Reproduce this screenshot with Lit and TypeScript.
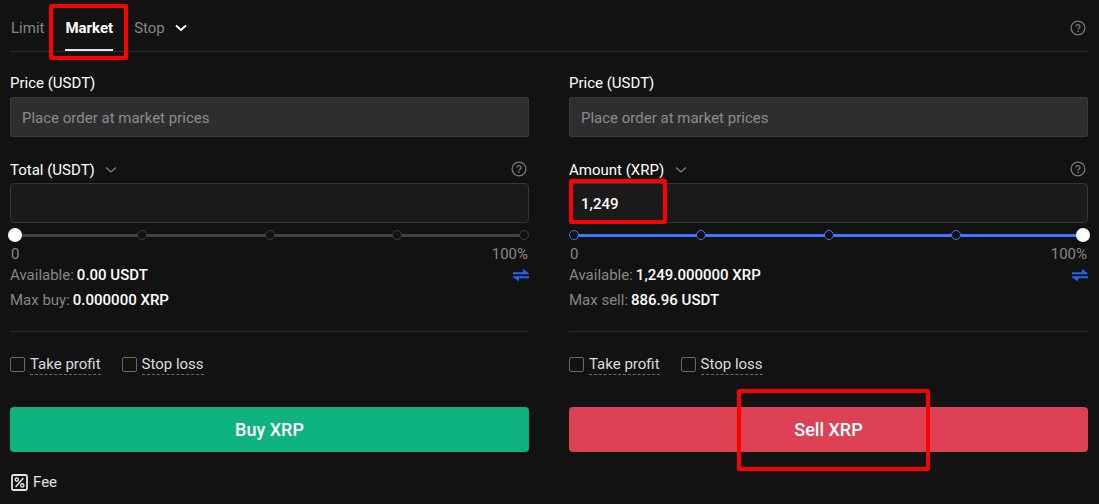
import { LitElement, html, css } from "lit";
import { customElement, property } from "lit/decorators.js";

const helpIcon = html`<svg width="16" height="16" viewBox="0 0 16 16" fill="none" stroke="currentColor" aria-hidden="true">
  <circle cx="8" cy="8" r="6.9" stroke-width="1.3" />
  <path d="M6 6.6a2 1.9 0 1 1 3 1.6c-.7.4-1 .7-1 1.4" stroke-width="1.3" />
  <path d="M8 10.6v1.4" stroke-width="1.4" />
</svg>`;

const chevron = (width: number) => html`<svg class="chevron" width="12" height="8" viewBox="0 0 12 8" fill="none" stroke="currentColor" stroke-width=${width} aria-hidden="true">
  <path d="M1 1.5 6 6l5-4.500" />
</svg>`;

const swapIcon = html`<svg width="16" height="14" viewBox="0 0 16 14" fill="currentColor" aria-hidden="true">
  <path d="M0 3.200h10V0l5.500 4v1.200H0zM16 7.200H0v1l6 4.300V9.200h10z" />
</svg>`;

const feeIcon = html`<svg width="17" height="17" viewBox="0 0 17 17" fill="none" stroke="currentColor" aria-hidden="true">
  <rect x="1" y="1" width="15" height="15" rx="1.500" stroke-width="1.800" />
  <path d="M12.400 4 4.600 13" stroke-width="1.600" />
  <circle cx="5.800" cy="5.600" r="1.600" stroke-width="1.400" />
  <circle cx="11.300" cy="11.400" r="1.600" stroke-width="1.400" />
</svg>`;

const shared = css`
  * { box-sizing: border-box; }
  button, input, select { font: inherit; margin: 0; }
  svg { display: block; flex: none; }
  .picker { display: inline-grid; align-items: center; color: #fff; }
  .picker select {
    grid-area: 1 / 1;
    appearance: none;
    border: 0;
    padding: 0 22px 0 0;
    background: transparent;
    color: inherit;
    line-height: 20px;
    outline: none;
  }
  .picker .chevron { grid-area: 1 / 1; justify-self: end; pointer-events: none; }
  .help {
    display: flex;
    border: 0;
    padding: 0;
    margin-right: 2px;
    background: none;
    color: #77797c;
  }
  .mark {
    position: absolute;
    border: 4px solid #fe0000;
    border-radius: 2px;
    pointer-events: none;
  }
`;

@customElement("order-form")
class OrderForm extends LitElement {
  @property() side: "buy" | "sell" = "buy";
  @property() unit = "";
  @property() amount = "";
  @property({ type: Number }) percent = 0;
  @property() available = "";
  @property() maxLabel = "";
  @property() max = "";
  @property() action = "";

  static styles = [shared, css`
    :host { display: block; min-width: 0; }
    .field { display: flex; flex-direction: column; gap: 4px; margin-bottom: 22px; }
    .field.compact { gap: 2px; margin-bottom: 5px; }
    .head { display: flex; align-items: center; justify-content: space-between; height: 20px; color: #fff; }
    .compact .head { height: 22px; }
    .head .chevron { color: #85878a; }
    .head .help { align-self: flex-start; padding-top: 2px; }
    .box { position: relative; display: flex; }
    .box input {
      width: 100%;
      height: 40px;
      padding: 1px 11px 0;
      border: 1px solid #373737;
      border-radius: 4px;
      background: #1a1a1a;
      color: #fff;
      font-weight: 500;
      outline: none;
    }
    .box input:disabled { background: #2e2e2e; border-color: #3a3a3a; border-radius: 2px; font-weight: 400; }
    .box input::placeholder { color: #8a8c8f; opacity: 1; }
    .mark.value { top: -4px; left: 0; width: 98px; height: 45px; }

    .slider { display: grid; align-items: center; height: 14px; --line: #424242; --ring: #3d3d3d; }
    .slider.sell { --line: #3b78fa; --ring: #3b78fa; }
    .line, .stops, .slider input { grid-area: 1 / 1; }
    .line { height: 3px; margin: 0 5px; background: var(--line); }
    .stops { display: flex; justify-content: space-between; }
    .stop { width: 10px; height: 10px; border: 1px solid var(--ring); border-radius: 50%; background: #121212; }
    .slider input {
      appearance: none;
      width: calc(100% + 4px);
      height: 14px;
      margin: 0 -2px;
      background: transparent;
      outline: none;
    }
    .slider input::-webkit-slider-thumb {
      appearance: none;
      width: 14px;
      height: 14px;
      border-radius: 50%;
      background: #fff;
    }
    .scale { display: flex; justify-content: space-between; margin-top: 2px; padding: 0 1px; line-height: 20px; height: 19px; color: #85878a; }
    .stat { display: flex; align-items: center; gap: 3px; line-height: 25px; color: #85878a; }
    .stat b { color: #fff; font-weight: 500; }
    .swap { display: flex; margin-left: auto; border: 0; padding: 0; background: none; color: #2463f5; }

    .checks { display: flex; gap: 21px; margin-top: 18px; padding-top: 22px; border-top: 1px solid #2a2a2a; }
    .check { display: flex; align-items: center; gap: 5px; height: 20px; color: #dcdcdc; }
    .check input { appearance: none; width: 15px; height: 15px; border: 1px solid #6a6a6a; border-radius: 2px; }
    .check span { line-height: 20px; border-bottom: 1px dashed #6a6a6a; }

    .cta { position: relative; margin-top: 33px; }
    .submit {
      display: block;
      width: 100%;
      height: 45px;
      border: 0;
      border-radius: 4px;
      color: #fff;
      font-size: 18px;
      font-weight: 500;
    }
    .submit.buy { background: #0fb37f; }
    .submit.sell { background: #dc4254; }
    .mark.action { top: -18px; bottom: -19px; left: calc(50% - 92px); width: 193px; }
  `];

  render() {
    const sell = this.side === "sell";
    return html`
      <div class="field">
        <label class="head" for="price">Price (USDT)</label>
        <div class="box"><input id="price" placeholder="Place order at market prices" disabled /></div>
      </div>
      <div class="field compact">
        <div class="head">
          <span class="picker">
            <select aria-label="Order unit"><option>${this.unit}</option></select>
            ${chevron(1.2)}
          </span>
          <button class="help" aria-label="Help">${helpIcon}</button>
        </div>
        <div class="box">
          <input aria-label=${this.unit} .value=${this.amount} />
          ${sell ? html`<div class="mark value"></div>` : ""}
        </div>
      </div>
      <div class="slider ${this.side}">
        <div class="line"></div>
        <div class="stops">${[0, 25, 50, 75, 100].map(() => html`<span class="stop"></span>`)}</div>
        <input type="range" min="0" max="100" aria-label="Share of balance" .value=${String(this.percent)} />
      </div>
      <div class="scale"><span>0</span><span>100%</span></div>
      <div class="stat">
        <span>Available:</span><b>${this.available}</b>
        <button class="swap" aria-label="Transfer">${swapIcon}</button>
      </div>
      <div class="stat"><span>${this.maxLabel}</span><b>${this.max}</b></div>
      <div class="checks">
        <label class="check"><input type="checkbox" /><span>Take profit</span></label>
        <label class="check"><input type="checkbox" /><span>Stop loss</span></label>
      </div>
      <div class="cta">
        <button class="submit ${this.side}">${this.action}</button>
        ${sell ? html`<div class="mark action"></div>` : ""}
      </div>
    `;
  }
}

@customElement("app-root")
class AppRoot extends LitElement {
  static styles = [shared, css`
    :host {
      display: block;
      box-sizing: border-box;
      min-height: 100vh;
      padding: 0 11px 0 10px;
      background: #121212;
      color: #fff;
      font: 15px/20px Roboto, "Noto Sans", sans-serif;
    }
    .tabs { display: flex; align-items: center; gap: 21px; height: 52px; padding: 4px 0 0 1px; border-bottom: 1px solid #2a2a2a; }
    .tab { position: relative; display: flex; align-items: center; height: 100%; border: 0; padding: 0; background: none; color: #85878a; }
    .tab.active { color: #fff; font-weight: 700; box-shadow: inset 0 -2px #e8e8e8; }
    .tabs .picker select { color: #85878a; }
    .tabs .help { margin-left: auto; }
    .mark.market { top: 0; right: -15px; bottom: -9px; left: -16px; }
    .forms { display: grid; grid-template-columns: 1fr 1fr; gap: 40px; padding-top: 21px; }
    .fee { display: inline-flex; align-items: center; gap: 5px; margin-top: 20px; padding-left: 1px; color: #e4e4e4; text-decoration: none; }
  `];

  render() {
    return html`
      <nav class="tabs">
        <button class="tab">Limit</button>
        <button class="tab active">Market<span class="mark market"></span></button>
        <span class="picker">
          <select aria-label="Stop order type"><option>Stop</option></select>
          ${chevron(1.8)}
        </span>
        <button class="help" aria-label="Help">${helpIcon}</button>
      </nav>
      <main class="forms">
        <order-form side="buy" unit="Total (USDT)" percent="0" available="0.00 USDT"
          maxLabel="Max buy:" max="0.000000 XRP" action="Buy XRP"></order-form>
        <order-form side="sell" unit="Amount (XRP)" amount="1,249" percent="100" available="1,249.000000 XRP"
          maxLabel="Max sell:" max="886.96 USDT" action="Sell XRP"></order-form>
      </main>
      <a class="fee" href="#fee">${feeIcon}<span>Fee</span></a>
    `;
  }
}
